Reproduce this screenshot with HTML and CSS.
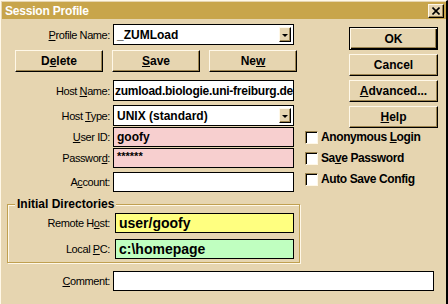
FILE: index.html
```html
<!DOCTYPE html>
<html lang="en">
<head>
  <meta charset="UTF-8" />
  <title>Session Profile</title>
  <link rel="stylesheet" href="styles.css">
</head>
<body>
  <div class="window" role="dialog" aria-label="Session Profile">
    <div class="titlebar">
      <span class="title">Session Profile</span>
      <button class="close" type="button" aria-label="Close">
        <svg width="8" height="8" viewBox="0 0 8 8" aria-hidden="true">
          <path d="M0.5 0.5 L7.5 7.5 M7.5 0.5 L0.5 7.5" stroke="#000" stroke-width="1.6" fill="none" />
        </svg>
      </button>
    </div>

    <div class="content">
      <div class="main">
        <div class="left">
          <div class="row r-profile">
            <label><u>P</u>rofile Name:</label>
            <div class="field combo">_ZUMLoad<span class="drop"><i></i></span></div>
          </div>

          <div class="btn-row">
            <button class="btn" type="button">D<u>e</u>lete</button>
            <button class="btn" type="button"><u>S</u>ave</button>
            <button class="btn" type="button">Ne<u>w</u></button>
          </div>

          <div class="row r-host">
            <label>Host <u>N</u>ame:</label>
            <div class="field tight">zumload.biologie.uni-freiburg.de</div>
          </div>
          <div class="row r-type">
            <label>Host <u>T</u>ype:</label>
            <div class="field combo">UNIX (standard)<span class="drop"><i></i></span></div>
          </div>
          <div class="row r-user">
            <label><u>U</u>ser ID:</label>
            <div class="field pink">goofy</div>
          </div>
          <div class="row r-pass">
            <label>Passwor<u>d</u>:</label>
            <div class="field pink stars">******</div>
          </div>
          <div class="row r-acct">
            <label>A<u>c</u>count:</label>
            <div class="field"></div>
          </div>

          <div class="group">
            <span class="group-title">Initial Directories</span>
            <div class="row">
              <label>Remote H<u>o</u>st:</label>
              <div class="field big yellow">user/goofy</div>
            </div>
            <div class="row r-local">
              <label>Local <u>P</u>C:</label>
              <div class="field big green">c:\homepage</div>
            </div>
          </div>
        </div>

        <div class="right">
          <button class="btn side default" type="button">OK</button>
          <button class="btn side" type="button">Cancel</button>
          <button class="btn side" type="button"><u>A</u>dvanced...</button>
          <button class="btn side" type="button"><u>H</u>elp</button>

          <div class="checks">
            <div class="check"><span class="box"></span><span>Anonymous <u>L</u>ogin</span></div>
            <div class="check"><span class="box"></span><span>Sa<u>v</u>e Password</span></div>
            <div class="check"><span class="box"></span><span>Auto Save Config</span></div>
          </div>
        </div>
      </div>

      <div class="row r-comment">
        <label><u>C</u>omment:</label>
        <div class="field wide"></div>
      </div>
    </div>
  </div>
</body>
</html>
```

FILE: styles.css
```css
:root {
  --face: #e6d5b0;
  --title: #c8a54b;
  --hi: #fff8e8;
  --shade: #9c8450;
  --pink: #f7cfcf;
  --yellow: #ffff80;
  --green: #c0ffc0;
  --font: 'Liberation Sans', Arial, sans-serif;
}

*, *::before, *::after {
  box-sizing: border-box;
}

html, body {
  margin: 0;
  background: var(--face);
}

body {
  font-family: var(--font);
  color: #000;
}

/* Window frame */
.window {
  width: 448px;
  height: 304px;
  border-top: 1px solid var(--hi);
  border-left: 1px solid var(--hi);
  border-right: 2px solid #000;
  padding: 1px 0 0 1px;
  background: var(--face);
  overflow: hidden;
}

.titlebar {
  height: 17px;
  background: var(--title);
  display: flex;
  align-items: center;
  justify-content: space-between;
  padding: 0 2px 0 3px;
}

.title {
  color: #fff;
  font-weight: 700;
  font-size: 12px;
  letter-spacing: -0.2px;
}

.close {
  width: 16px;
  height: 14px;
  padding: 0;
  margin: 0;
  background: var(--face);
  border: 1px solid;
  border-color: var(--hi) #000 #000 var(--hi);
  box-shadow: inset -1px -1px 0 var(--shade);
  display: flex;
  align-items: center;
  justify-content: center;
}

/* Layout */
.main {
  display: flex;
}

.left {
  width: 303px;
}

.right {
  flex: 1;
}

.row {
  display: flex;
  align-items: center;
}

.row label {
  width: 108px;
  margin-right: 3px;
  text-align: right;
  font-size: 11px;
  letter-spacing: -0.4px;
  white-space: nowrap;
}

/* Fields */
.field {
  position: relative;
  width: 181px;
  height: 20px;
  border: 1px solid #000;
  background: #fff;
  font-weight: 700;
  font-size: 12px;
  padding-left: 3px;
  display: flex;
  align-items: center;
  white-space: nowrap;
  overflow: hidden;
}

.field.tight {
  letter-spacing: -0.25px;
  padding-left: 1px;
}

.combo {
  height: 21px;
}

.drop {
  position: absolute;
  right: 2px;
  top: 2px;
  width: 12px;
  height: 15px;
  background: var(--face);
  border: 1px solid;
  border-color: var(--hi) #000 #000 var(--hi);
  box-shadow: inset -1px -1px 0 var(--shade);
  display: flex;
  align-items: center;
  justify-content: center;
}

.drop i {
  display: block;
  width: 0;
  height: 0;
  border-left: 3px solid transparent;
  border-right: 3px solid transparent;
  border-top: 3px solid #000;
  margin-top: 1px;
}

.pink { background: var(--pink); }
.yellow { background: var(--yellow); }
.green { background: var(--green); }

.stars {
  align-items: flex-start;
  font-size: 11px;
  padding-top: 1px;
}

.big {
  font-size: 14px;
  width: 179px;
}

.wide {
  width: 321px;
}

.r-profile { margin-top: 5px; }
.r-host { margin-top: 8px; }
.r-host .field { height: 21px; }
.r-type { margin-top: 4px; }
.r-user { margin-top: 1px; }
.r-pass { margin-top: 1px; }
.r-acct { margin-top: 4px; }
.r-comment { margin-top: 8px; }

/* Buttons */
.btn {
  width: 88px;
  height: 22px;
  padding: 0;
  margin: 0;
  font-family: var(--font);
  font-weight: 700;
  font-size: 12px;
  color: #000;
  background: var(--face);
  border: 1px solid;
  border-color: var(--hi) #000 #000 var(--hi);
  box-shadow: inset -1px -1px 0 var(--shade);
}

.btn-row {
  display: flex;
  gap: 9px;
  margin-top: 5px;
  padding-left: 13px;
}

.side {
  display: block;
  width: 89px;
  margin: 4px 0 0 44px;
}

.side.default {
  margin-top: 8px;
  height: 23px;
  border-color: #000;
  box-shadow: inset 1px 1px 0 var(--hi), inset -1px -1px 0 #000, inset -2px -2px 0 var(--shade);
}

/* Checkboxes */
.checks {
  margin-top: 3px;
}

.check {
  display: flex;
  height: 21px;
  align-items: flex-start;
  font-weight: 700;
  font-size: 12px;
  letter-spacing: -0.4px;
  line-height: 13px;
  white-space: nowrap;
}

.box {
  width: 13px;
  height: 13px;
  margin-right: 3px;
  background: #fff;
  border: 1px solid;
  border-color: var(--shade) var(--hi) var(--hi) var(--shade);
  box-shadow: inset 1px 1px 0 #000;
}

/* Group box */
.group {
  position: relative;
  width: 293px;
  margin: 12px 0 0 5px;
  padding: 8px 0 3px 0;
  border: 1px solid #c0a050;
  box-shadow: inset 1px 1px 0 var(--hi), 1px 1px 0 var(--hi);
}

.group-title {
  position: absolute;
  top: -8px;
  left: 7px;
  padding: 0 2px;
  background: var(--face);
  font-weight: 700;
  font-size: 12px;
  line-height: 14px;
}

.group .row label {
  width: 102px;
  margin-right: 5px;
}

.group .r-local {
  margin-top: 6px;
}
```
